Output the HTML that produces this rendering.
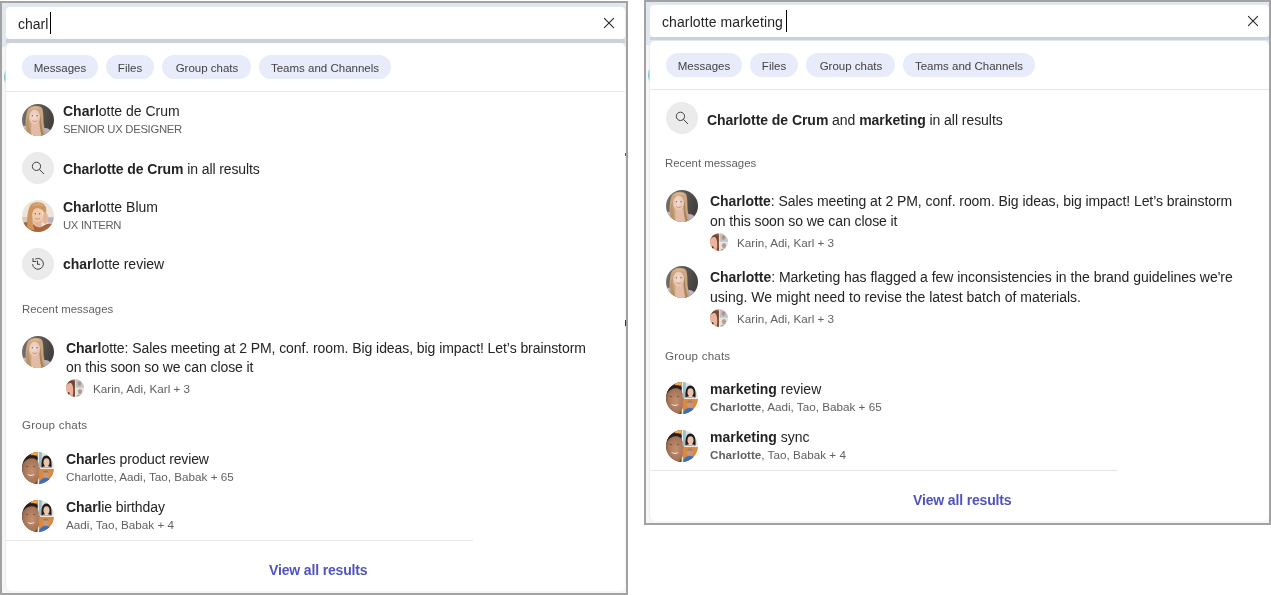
<!DOCTYPE html>
<html><head><meta charset="utf-8"><title>Search</title>
<style>
html,body{margin:0;padding:0;background:#ffffff;width:1271px;height:595px;overflow:hidden;}
body{position:relative;font-family:"Liberation Sans", sans-serif;}
.t{will-change:transform;}
.r{position:absolute;display:block;}
.t{position:absolute;white-space:nowrap;line-height:20px;font-family:"Liberation Sans", sans-serif;}
.t b{font-weight:700;}
.chip{background:#e8ebfa;border-radius:12px;}
</style></head><body>
<div class="r" style="left:0px;top:1px;width:628px;height:594px;background:#a2a2a2;"></div>
<div class="r" style="left:2px;top:3px;width:624px;height:590px;background:#f6f6f6;"></div>
<div class="r" style="left:2px;top:3px;width:624px;height:43.8px;background:#e1e7ee;"></div>
<div class="r" style="left:4px;top:63.5px;width:26.5px;height:26.5px;border-radius:50%;background:#7fc7c7"></div>
<div class="r" style="left:5.7px;top:7px;width:619px;height:32px;background:#fff;border-radius:4px"></div>
<div class="r" style="left:5.7px;top:39px;width:619.8px;height:3.6px;background:#ccd2d9;"></div>
<div class="r" style="left:5.9px;top:42.5px;width:619.6px;height:548.5px;background:#fff;border-radius:5px;box-shadow:-0.6px 0 0 #e9e9e9"></div>
<div class="t" style="left:18.30px;top:13.95px;font-size:14px;color:#242424;font-weight:400;letter-spacing:0px;">charl</div>
<div class="r" style="left:49.6px;top:12px;width:1.5px;height:21.8px;background:#000;"></div>
<svg class="r" style="left:603px;top:17px" width="12" height="12" viewBox="0 0 12 12"><path d="M1.4 1.4 L10.6 10.6 M10.6 1.4 L1.4 10.6" stroke="#242424" stroke-width="1.05" stroke-linecap="round"/></svg>
<div class="r chip" style="left:22px;top:55px;width:76px;height:24px;"></div>
<div class="t" style="left:60.00px;top:58.11px;font-size:11.5px;color:#424242;font-weight:400;letter-spacing:0px;transform:translateX(-50%);">Messages</div>
<div class="r chip" style="left:106px;top:55px;width:48px;height:24px;"></div>
<div class="t" style="left:130.00px;top:58.11px;font-size:11.5px;color:#424242;font-weight:400;letter-spacing:0px;transform:translateX(-50%);">Files</div>
<div class="r chip" style="left:162px;top:55px;width:89px;height:24px;"></div>
<div class="t" style="left:206.50px;top:58.11px;font-size:11.5px;color:#424242;font-weight:400;letter-spacing:0px;transform:translateX(-50%);">Group chats</div>
<div class="r chip" style="left:259px;top:55px;width:132px;height:24px;"></div>
<div class="t" style="left:325.00px;top:58.11px;font-size:11.5px;color:#424242;font-weight:400;letter-spacing:0px;transform:translateX(-50%);">Teams and Channels</div>
<div class="r" style="left:5.9px;top:90.6px;width:619.6px;height:1px;background:#e6e6e6;"></div>
<svg class="r" style="left:22px;top:104px" width="32" height="32" viewBox="0 0 32 32"><defs><clipPath id="cc1"><circle cx="16" cy="16" r="16"/></clipPath>
<linearGradient id="bgc1" x1="0" y1="0" x2="1" y2="0.3"><stop offset="0" stop-color="#7a7470"/><stop offset="0.6" stop-color="#5a5552"/><stop offset="1" stop-color="#45413f"/></linearGradient>
<radialGradient id="fc1" cx="0.45" cy="0.45" r="0.6"><stop offset="0" stop-color="#f5dccf"/><stop offset="1" stop-color="#e6c0ac"/></radialGradient></defs>
<g clip-path="url(#cc1)"><rect width="32" height="32" fill="url(#bgc1)"/>
<path d="M0 22 C3 21 6 22 8 26 L8 32 L0 32 Z" fill="#c4c0da"/>
<path d="M20 25 C23 23 27 24 30 28 L30 32 L20 32 Z" fill="#b9b3c9"/>
<path d="M4 32 C3 22 3.5 10 6 5 C9 1 17 0.5 20 4 C22 8 21 16 22 22 C23 27 24 30 25 32 Z" fill="#c9a580"/>
<path d="M7 6 C10 2 17 2 19.5 5.5 C16 4 11 4 7 6 Z" fill="#ddbd96"/>
<path d="M9.5 19 L17.5 19 L19 32 L9 32 Z" fill="#e4bca6"/>
<ellipse cx="12.6" cy="13" rx="5.5" ry="7.5" fill="url(#fc1)"/>
<path d="M6.5 11 C6 20 8.5 27 10 32 L5.5 32 C4 26 4 17 6.5 11 Z" fill="#b8936a"/>
<path d="M18.5 11 C19.5 19 19.5 26 23 32 L20 32 C17.5 26 17 19 18.5 11 Z" fill="#a88560"/>
<circle cx="10.4" cy="11.8" r="0.8" fill="#6a7a96"/><circle cx="15" cy="11.8" r="0.8" fill="#6a7a96"/>
<path d="M10.4 16.6 C11.9 17.8 13.7 17.8 15.2 16.6" stroke="#c98a80" stroke-width="0.9" fill="none"/>
</g></svg>
<div class="t" style="left:63.40px;top:100.95px;font-size:14px;color:#242424;font-weight:400;letter-spacing:0px;"><b>Charl</b>otte de Crum</div>
<div class="t" style="left:63.40px;top:119.08px;font-size:11.3px;color:#616161;font-weight:400;letter-spacing:-0.3px;">SENIOR UX DESIGNER</div>
<svg class="r" style="left:22px;top:152px" width="32" height="32" viewBox="0 0 32 32"><circle cx="16" cy="16" r="16" fill="#ebebeb"/><circle cx="14.45" cy="14.35" r="4.15" fill="none" stroke="#424242" stroke-width="1"/><path d="M17.6 17.6 L21.7 21.7" stroke="#424242" stroke-width="1" stroke-linecap="round"/></svg>
<div class="t" style="left:63.10px;top:158.75px;font-size:14px;color:#242424;font-weight:400;letter-spacing:-0.1px;"><b>Charlotte de Crum</b> in all results</div>
<svg class="r" style="left:22px;top:200px" width="32" height="32" viewBox="0 0 32 32"><defs><clipPath id="cb2"><circle cx="16" cy="16" r="16"/></clipPath></defs>
<g clip-path="url(#cb2)"><rect width="32" height="32" fill="#ece5d9"/>
<rect y="17" width="32" height="6" fill="#d8ccb8"/>
<rect x="26" y="17.5" width="5" height="5" fill="#bfb0bd"/>
<path d="M12 20 L19 20 L20 28 L11 28 Z" fill="#e7b597"/>
<path d="M0 24 C4 21 9 21 12 25 C15 28 19 28 21 26 C25 23 29 23 32 24 L32 32 L0 32 Z" fill="#a8633f"/>
<path d="M5.5 29 C4.5 19 5.5 8 9.5 4 C13.5 1.5 20 1.5 23 5.5 C25 8.5 24.5 12 23 15 L21 11 C18 7.5 12.5 8 10.8 12 C10 18 10.5 25 12.5 30 Z" fill="#cd955f"/>
<path d="M9.5 6 C13 2.5 20 2.5 22.5 6.5 C19 5 13 5 9.5 6 Z" fill="#deac78"/>
<ellipse cx="15.4" cy="15" rx="5" ry="7" fill="#f1c9ab"/>
<ellipse cx="23.3" cy="18" rx="2.6" ry="6" fill="#e6b595"/>
<circle cx="13.3" cy="13.8" r="0.7" fill="#7a6a5a"/><circle cx="17.5" cy="13.8" r="0.7" fill="#7a6a5a"/>
<path d="M13 18.3 C14.5 19.3 16.5 19.3 18 18.3" stroke="#c98878" stroke-width="0.9" fill="none"/>
</g></svg>
<div class="t" style="left:63.40px;top:196.95px;font-size:14px;color:#242424;font-weight:400;letter-spacing:0px;"><b>Charl</b>otte Blum</div>
<div class="t" style="left:63.40px;top:215.08px;font-size:11.3px;color:#616161;font-weight:400;letter-spacing:-0.3px;">UX INTERN</div>
<svg class="r" style="left:22px;top:248px" width="32" height="32" viewBox="0 0 32 32"><circle cx="16" cy="16" r="16" fill="#ebebeb"/><path d="M13.3 11.17 A5.4 5.4 0 1 1 10.6 16.13" fill="none" stroke="#424242" stroke-width="1"/><path d="M11 10.4 L11 13.4 L13.85 13.4" fill="none" stroke="#424242" stroke-width="1.05" stroke-linecap="round" stroke-linejoin="round"/><path d="M15.5 13.1 L15.5 16.15 L17.66 16.15" fill="none" stroke="#424242" stroke-width="1.05" stroke-linecap="round" stroke-linejoin="round"/></svg>
<div class="t" style="left:63.40px;top:254.45px;font-size:14px;color:#242424;font-weight:400;letter-spacing:0px;"><b>charl</b>otte review</div>
<div class="t" style="left:21.60px;top:299.05px;font-size:11.4px;color:#616161;font-weight:400;letter-spacing:0px;">Recent messages</div>
<svg class="r" style="left:22px;top:336px" width="32" height="32" viewBox="0 0 32 32"><defs><clipPath id="cc3"><circle cx="16" cy="16" r="16"/></clipPath>
<linearGradient id="bgc3" x1="0" y1="0" x2="1" y2="0.3"><stop offset="0" stop-color="#7a7470"/><stop offset="0.6" stop-color="#5a5552"/><stop offset="1" stop-color="#45413f"/></linearGradient>
<radialGradient id="fc3" cx="0.45" cy="0.45" r="0.6"><stop offset="0" stop-color="#f5dccf"/><stop offset="1" stop-color="#e6c0ac"/></radialGradient></defs>
<g clip-path="url(#cc3)"><rect width="32" height="32" fill="url(#bgc3)"/>
<path d="M0 22 C3 21 6 22 8 26 L8 32 L0 32 Z" fill="#c4c0da"/>
<path d="M20 25 C23 23 27 24 30 28 L30 32 L20 32 Z" fill="#b9b3c9"/>
<path d="M4 32 C3 22 3.5 10 6 5 C9 1 17 0.5 20 4 C22 8 21 16 22 22 C23 27 24 30 25 32 Z" fill="#c9a580"/>
<path d="M7 6 C10 2 17 2 19.5 5.5 C16 4 11 4 7 6 Z" fill="#ddbd96"/>
<path d="M9.5 19 L17.5 19 L19 32 L9 32 Z" fill="#e4bca6"/>
<ellipse cx="12.6" cy="13" rx="5.5" ry="7.5" fill="url(#fc3)"/>
<path d="M6.5 11 C6 20 8.5 27 10 32 L5.5 32 C4 26 4 17 6.5 11 Z" fill="#b8936a"/>
<path d="M18.5 11 C19.5 19 19.5 26 23 32 L20 32 C17.5 26 17 19 18.5 11 Z" fill="#a88560"/>
<circle cx="10.4" cy="11.8" r="0.8" fill="#6a7a96"/><circle cx="15" cy="11.8" r="0.8" fill="#6a7a96"/>
<path d="M10.4 16.6 C11.9 17.8 13.7 17.8 15.2 16.6" stroke="#c98a80" stroke-width="0.9" fill="none"/>
</g></svg>
<div class="t" style="left:66.20px;top:337.55px;font-size:14px;color:#242424;font-weight:400;letter-spacing:-0.07px;"><b>Charl</b>otte: Sales meeting at 2 PM, conf. room. Big ideas, big impact! Let’s brainstorm</div>
<div class="t" style="left:66.20px;top:356.95px;font-size:14px;color:#242424;font-weight:400;letter-spacing:-0.08px;">on this soon so we can close it</div>
<svg class="r" style="left:66px;top:379px" width="18" height="18" viewBox="0 0 18 18"><defs><clipPath id="cs4"><circle cx="9" cy="9" r="9"/></clipPath></defs>
<g clip-path="url(#cs4)"><rect width="18" height="18" fill="#f2f2f2"/>
<rect x="0" y="0" width="8.9" height="18" fill="#d8a08a"/>
<ellipse cx="4.2" cy="10" rx="4.6" ry="6.2" fill="#eab59c"/>
<path d="M0 7 C1 2.5 5 0.5 8.9 1.5 L8.9 18 L6.8 18 C7.6 12 7.6 6 5 4 C3 3.5 1.5 4.5 0 7 Z" fill="#6e4a36"/>
<ellipse cx="2.4" cy="14.4" rx="1.3" ry="1.1" fill="#3a2a22"/>
<rect x="9.5" y="0" width="8.5" height="8.8" fill="#bcc4ca"/>
<ellipse cx="13.5" cy="4.6" rx="1.8" ry="2.4" fill="#b89282"/>
<rect x="9.5" y="9.3" width="8.5" height="8.7" fill="#e2e2e2"/>
<ellipse cx="14" cy="12.6" rx="2.2" ry="2.6" fill="#c49888"/>
<ellipse cx="14" cy="17.6" rx="3.5" ry="2" fill="#9aa0a8"/>
</g></svg>
<div class="t" style="left:92.70px;top:378.54px;font-size:11.7px;color:#616161;font-weight:400;letter-spacing:0px;">Karin, Adi, Karl + 3</div>
<div class="t" style="left:21.60px;top:415.18px;font-size:11.6px;color:#616161;font-weight:400;letter-spacing:0.2px;">Group chats</div>
<svg class="r" style="left:22px;top:452px" width="32" height="32" viewBox="0 0 32 32"><defs><clipPath id="cg5"><circle cx="16" cy="16" r="16"/></clipPath>
<radialGradient id="gm5" cx="0.55" cy="0.5" r="0.6"><stop offset="0" stop-color="#c4906f"/><stop offset="0.7" stop-color="#a67458"/><stop offset="1" stop-color="#7a5240"/></radialGradient></defs>
<g clip-path="url(#cg5)"><rect width="32" height="32" fill="#ffffff"/>
<rect x="0" y="0" width="15.6" height="32" fill="#5a3a2c"/>
<rect x="9" y="0" width="6.6" height="3.5" fill="#f0a848"/>
<ellipse cx="9" cy="19" rx="9.5" ry="13.5" fill="url(#gm5)"/>
<path d="M0 9 C3 3 11 2 15.6 5 L15.6 8 C11 5 4 6 0 12 Z" fill="#2a1f1a"/>
<circle cx="5" cy="14.5" r="0.7" fill="#5a3a2a"/><circle cx="12" cy="14.5" r="0.7" fill="#5a3a2a"/>
<path d="M5 22 C7 24.5 11 24.5 13 22 C11 23 7 23 5 22 Z" fill="#f2ece8"/>
<rect x="16.8" y="0" width="15.2" height="15.5" fill="#d6e2e4"/>
<rect x="16.8" y="0" width="3" height="15.5" fill="#9fbcc2"/>
<path d="M19.5 15.5 C19 8 20.5 3.5 24.5 3.5 C28.5 3.5 30 8 29.5 15.5 Z" fill="#1e1a19"/>
<ellipse cx="24.5" cy="10.2" rx="3" ry="3.9" fill="#e9c4aa"/>
<path d="M20 15.5 C22 13.5 27 13.5 29 15.5 Z" fill="#ead0c0"/>
<rect x="16.8" y="16.8" width="15.2" height="15.2" fill="#d88a42"/>
<ellipse cx="23.8" cy="22.2" rx="2.8" ry="3.4" fill="#c9977c"/>
<path d="M21 20.5 C21 18 26.5 18 26.5 20.5 Z" fill="#8a7a70"/>
<path d="M17 32 C18 27 21 26 24 26 C27 26 30 27 31 32 Z" fill="#3c6fb8"/>
</g></svg>
<div class="t" style="left:66.40px;top:449.15px;font-size:14px;color:#242424;font-weight:400;letter-spacing:-0.12px;"><b>Charl</b>es product review</div>
<div class="t" style="left:66.40px;top:466.94px;font-size:11.7px;color:#616161;font-weight:400;letter-spacing:0px;">Charlotte, Aadi, Tao, Babak + 65</div>
<svg class="r" style="left:22px;top:500px" width="32" height="32" viewBox="0 0 32 32"><defs><clipPath id="cg6"><circle cx="16" cy="16" r="16"/></clipPath>
<radialGradient id="gm6" cx="0.55" cy="0.5" r="0.6"><stop offset="0" stop-color="#c4906f"/><stop offset="0.7" stop-color="#a67458"/><stop offset="1" stop-color="#7a5240"/></radialGradient></defs>
<g clip-path="url(#cg6)"><rect width="32" height="32" fill="#ffffff"/>
<rect x="0" y="0" width="15.6" height="32" fill="#5a3a2c"/>
<rect x="9" y="0" width="6.6" height="3.5" fill="#f0a848"/>
<ellipse cx="9" cy="19" rx="9.5" ry="13.5" fill="url(#gm6)"/>
<path d="M0 9 C3 3 11 2 15.6 5 L15.6 8 C11 5 4 6 0 12 Z" fill="#2a1f1a"/>
<circle cx="5" cy="14.5" r="0.7" fill="#5a3a2a"/><circle cx="12" cy="14.5" r="0.7" fill="#5a3a2a"/>
<path d="M5 22 C7 24.5 11 24.5 13 22 C11 23 7 23 5 22 Z" fill="#f2ece8"/>
<rect x="16.8" y="0" width="15.2" height="15.5" fill="#d6e2e4"/>
<rect x="16.8" y="0" width="3" height="15.5" fill="#9fbcc2"/>
<path d="M19.5 15.5 C19 8 20.5 3.5 24.5 3.5 C28.5 3.5 30 8 29.5 15.5 Z" fill="#1e1a19"/>
<ellipse cx="24.5" cy="10.2" rx="3" ry="3.9" fill="#e9c4aa"/>
<path d="M20 15.5 C22 13.5 27 13.5 29 15.5 Z" fill="#ead0c0"/>
<rect x="16.8" y="16.8" width="15.2" height="15.2" fill="#d88a42"/>
<ellipse cx="23.8" cy="22.2" rx="2.8" ry="3.4" fill="#c9977c"/>
<path d="M21 20.5 C21 18 26.5 18 26.5 20.5 Z" fill="#8a7a70"/>
<path d="M17 32 C18 27 21 26 24 26 C27 26 30 27 31 32 Z" fill="#3c6fb8"/>
</g></svg>
<div class="t" style="left:66.40px;top:497.15px;font-size:14px;color:#242424;font-weight:400;letter-spacing:-0.1px;"><b>Charl</b>ie birthday</div>
<div class="t" style="left:66.40px;top:514.94px;font-size:11.7px;color:#616161;font-weight:400;letter-spacing:0px;">Aadi, Tao, Babak + 4</div>
<div class="r" style="left:5.9px;top:539.6px;width:467.6px;height:1px;background:#e6e6e6;"></div>
<div class="t" style="left:269.30px;top:559.75px;font-size:14px;color:#4f53bd;font-weight:700;letter-spacing:-0.15px;">View all results</div>
<div class="r" style="left:625px;top:152.5px;width:1px;height:3.5px;background:#555;"></div>
<div class="r" style="left:625px;top:320px;width:1px;height:6px;background:#333;"></div>
<div class="r" style="left:644px;top:0px;width:627px;height:524.6px;background:#a2a2a2;"></div>
<div class="r" style="left:646px;top:2px;width:623px;height:520.6px;background:#f6f6f6;"></div>
<div class="r" style="left:646px;top:2px;width:623px;height:42.5px;background:#e1e7ee;"></div>
<div class="r" style="left:648px;top:61.5px;width:26.5px;height:26.5px;border-radius:50%;background:#7fc7c7"></div>
<div class="r" style="left:650.3px;top:4.7px;width:618.5px;height:32px;background:#fff;border-radius:4px"></div>
<div class="r" style="left:650.3px;top:36.7px;width:618.5px;height:3.8px;background:#ccd2d9;"></div>
<div class="r" style="left:650px;top:40.5px;width:618.8px;height:480.5px;background:#fff;border-radius:5px;box-shadow:-0.6px 0 0 #e9e9e9"></div>
<div class="t" style="left:662.20px;top:11.65px;font-size:14px;color:#242424;font-weight:400;letter-spacing:0.1px;">charlotte marketing</div>
<div class="r" style="left:785.6px;top:10px;width:1.5px;height:21.7px;background:#000;"></div>
<svg class="r" style="left:1247px;top:14.8px" width="12" height="12" viewBox="0 0 12 12"><path d="M1.4 1.4 L10.6 10.6 M10.6 1.4 L1.4 10.6" stroke="#242424" stroke-width="1.05" stroke-linecap="round"/></svg>
<div class="r chip" style="left:666px;top:52.9px;width:76px;height:24px;"></div>
<div class="t" style="left:704.00px;top:56.01px;font-size:11.5px;color:#424242;font-weight:400;letter-spacing:0px;transform:translateX(-50%);">Messages</div>
<div class="r chip" style="left:750px;top:52.9px;width:48px;height:24px;"></div>
<div class="t" style="left:774.00px;top:56.01px;font-size:11.5px;color:#424242;font-weight:400;letter-spacing:0px;transform:translateX(-50%);">Files</div>
<div class="r chip" style="left:806px;top:52.9px;width:89px;height:24px;"></div>
<div class="t" style="left:850.50px;top:56.01px;font-size:11.5px;color:#424242;font-weight:400;letter-spacing:0px;transform:translateX(-50%);">Group chats</div>
<div class="r chip" style="left:903px;top:52.9px;width:132px;height:24px;"></div>
<div class="t" style="left:969.00px;top:56.01px;font-size:11.5px;color:#424242;font-weight:400;letter-spacing:0px;transform:translateX(-50%);">Teams and Channels</div>
<div class="r" style="left:650px;top:89px;width:618.8px;height:1px;background:#e6e6e6;"></div>
<svg class="r" style="left:666px;top:102px" width="32" height="32" viewBox="0 0 32 32"><circle cx="16" cy="16" r="16" fill="#ebebeb"/><circle cx="14.45" cy="14.35" r="4.15" fill="none" stroke="#424242" stroke-width="1"/><path d="M17.6 17.6 L21.7 21.7" stroke="#424242" stroke-width="1" stroke-linecap="round"/></svg>
<div class="t" style="left:707.40px;top:109.65px;font-size:14px;color:#242424;font-weight:400;letter-spacing:-0.05px;"><b>Charlotte de Crum</b> and <b>marketing</b> in all results</div>
<div class="t" style="left:665.20px;top:153.25px;font-size:11.4px;color:#616161;font-weight:400;letter-spacing:0px;">Recent messages</div>
<svg class="r" style="left:666px;top:190px" width="32" height="32" viewBox="0 0 32 32"><defs><clipPath id="cc7"><circle cx="16" cy="16" r="16"/></clipPath>
<linearGradient id="bgc7" x1="0" y1="0" x2="1" y2="0.3"><stop offset="0" stop-color="#7a7470"/><stop offset="0.6" stop-color="#5a5552"/><stop offset="1" stop-color="#45413f"/></linearGradient>
<radialGradient id="fc7" cx="0.45" cy="0.45" r="0.6"><stop offset="0" stop-color="#f5dccf"/><stop offset="1" stop-color="#e6c0ac"/></radialGradient></defs>
<g clip-path="url(#cc7)"><rect width="32" height="32" fill="url(#bgc7)"/>
<path d="M0 22 C3 21 6 22 8 26 L8 32 L0 32 Z" fill="#c4c0da"/>
<path d="M20 25 C23 23 27 24 30 28 L30 32 L20 32 Z" fill="#b9b3c9"/>
<path d="M4 32 C3 22 3.5 10 6 5 C9 1 17 0.5 20 4 C22 8 21 16 22 22 C23 27 24 30 25 32 Z" fill="#c9a580"/>
<path d="M7 6 C10 2 17 2 19.5 5.5 C16 4 11 4 7 6 Z" fill="#ddbd96"/>
<path d="M9.5 19 L17.5 19 L19 32 L9 32 Z" fill="#e4bca6"/>
<ellipse cx="12.6" cy="13" rx="5.5" ry="7.5" fill="url(#fc7)"/>
<path d="M6.5 11 C6 20 8.5 27 10 32 L5.5 32 C4 26 4 17 6.5 11 Z" fill="#b8936a"/>
<path d="M18.5 11 C19.5 19 19.5 26 23 32 L20 32 C17.5 26 17 19 18.5 11 Z" fill="#a88560"/>
<circle cx="10.4" cy="11.8" r="0.8" fill="#6a7a96"/><circle cx="15" cy="11.8" r="0.8" fill="#6a7a96"/>
<path d="M10.4 16.6 C11.9 17.8 13.7 17.8 15.2 16.6" stroke="#c98a80" stroke-width="0.9" fill="none"/>
</g></svg>
<div class="t" style="left:710.00px;top:191.15px;font-size:14px;color:#242424;font-weight:400;letter-spacing:-0.07px;"><b>Charlotte</b>: Sales meeting at 2 PM, conf. room. Big ideas, big impact! Let’s brainstorm</div>
<div class="t" style="left:710.00px;top:211.35px;font-size:14px;color:#242424;font-weight:400;letter-spacing:-0.08px;">on this soon so we can close it</div>
<svg class="r" style="left:710px;top:233px" width="18" height="18" viewBox="0 0 18 18"><defs><clipPath id="cs8"><circle cx="9" cy="9" r="9"/></clipPath></defs>
<g clip-path="url(#cs8)"><rect width="18" height="18" fill="#f2f2f2"/>
<rect x="0" y="0" width="8.9" height="18" fill="#d8a08a"/>
<ellipse cx="4.2" cy="10" rx="4.6" ry="6.2" fill="#eab59c"/>
<path d="M0 7 C1 2.5 5 0.5 8.9 1.5 L8.9 18 L6.8 18 C7.6 12 7.6 6 5 4 C3 3.5 1.5 4.5 0 7 Z" fill="#6e4a36"/>
<ellipse cx="2.4" cy="14.4" rx="1.3" ry="1.1" fill="#3a2a22"/>
<rect x="9.5" y="0" width="8.5" height="8.8" fill="#bcc4ca"/>
<ellipse cx="13.5" cy="4.6" rx="1.8" ry="2.4" fill="#b89282"/>
<rect x="9.5" y="9.3" width="8.5" height="8.7" fill="#e2e2e2"/>
<ellipse cx="14" cy="12.6" rx="2.2" ry="2.6" fill="#c49888"/>
<ellipse cx="14" cy="17.6" rx="3.5" ry="2" fill="#9aa0a8"/>
</g></svg>
<div class="t" style="left:736.60px;top:233.14px;font-size:11.7px;color:#616161;font-weight:400;letter-spacing:0px;">Karin, Adi, Karl + 3</div>
<svg class="r" style="left:666px;top:266px" width="32" height="32" viewBox="0 0 32 32"><defs><clipPath id="cc9"><circle cx="16" cy="16" r="16"/></clipPath>
<linearGradient id="bgc9" x1="0" y1="0" x2="1" y2="0.3"><stop offset="0" stop-color="#7a7470"/><stop offset="0.6" stop-color="#5a5552"/><stop offset="1" stop-color="#45413f"/></linearGradient>
<radialGradient id="fc9" cx="0.45" cy="0.45" r="0.6"><stop offset="0" stop-color="#f5dccf"/><stop offset="1" stop-color="#e6c0ac"/></radialGradient></defs>
<g clip-path="url(#cc9)"><rect width="32" height="32" fill="url(#bgc9)"/>
<path d="M0 22 C3 21 6 22 8 26 L8 32 L0 32 Z" fill="#c4c0da"/>
<path d="M20 25 C23 23 27 24 30 28 L30 32 L20 32 Z" fill="#b9b3c9"/>
<path d="M4 32 C3 22 3.5 10 6 5 C9 1 17 0.5 20 4 C22 8 21 16 22 22 C23 27 24 30 25 32 Z" fill="#c9a580"/>
<path d="M7 6 C10 2 17 2 19.5 5.5 C16 4 11 4 7 6 Z" fill="#ddbd96"/>
<path d="M9.5 19 L17.5 19 L19 32 L9 32 Z" fill="#e4bca6"/>
<ellipse cx="12.6" cy="13" rx="5.5" ry="7.5" fill="url(#fc9)"/>
<path d="M6.5 11 C6 20 8.5 27 10 32 L5.5 32 C4 26 4 17 6.5 11 Z" fill="#b8936a"/>
<path d="M18.5 11 C19.5 19 19.5 26 23 32 L20 32 C17.5 26 17 19 18.5 11 Z" fill="#a88560"/>
<circle cx="10.4" cy="11.8" r="0.8" fill="#6a7a96"/><circle cx="15" cy="11.8" r="0.8" fill="#6a7a96"/>
<path d="M10.4 16.6 C11.9 17.8 13.7 17.8 15.2 16.6" stroke="#c98a80" stroke-width="0.9" fill="none"/>
</g></svg>
<div class="t" style="left:710.00px;top:267.35px;font-size:14px;color:#242424;font-weight:400;letter-spacing:-0.025px;"><b>Charlotte</b>: Marketing has flagged a few inconsistencies in the brand guidelines we're</div>
<div class="t" style="left:710.00px;top:287.45px;font-size:14px;color:#242424;font-weight:400;letter-spacing:0px;">using. We might need to revise the latest batch of materials.</div>
<svg class="r" style="left:710px;top:309px" width="18" height="18" viewBox="0 0 18 18"><defs><clipPath id="cs10"><circle cx="9" cy="9" r="9"/></clipPath></defs>
<g clip-path="url(#cs10)"><rect width="18" height="18" fill="#f2f2f2"/>
<rect x="0" y="0" width="8.9" height="18" fill="#d8a08a"/>
<ellipse cx="4.2" cy="10" rx="4.6" ry="6.2" fill="#eab59c"/>
<path d="M0 7 C1 2.5 5 0.5 8.9 1.5 L8.9 18 L6.8 18 C7.6 12 7.6 6 5 4 C3 3.5 1.5 4.5 0 7 Z" fill="#6e4a36"/>
<ellipse cx="2.4" cy="14.4" rx="1.3" ry="1.1" fill="#3a2a22"/>
<rect x="9.5" y="0" width="8.5" height="8.8" fill="#bcc4ca"/>
<ellipse cx="13.5" cy="4.6" rx="1.8" ry="2.4" fill="#b89282"/>
<rect x="9.5" y="9.3" width="8.5" height="8.7" fill="#e2e2e2"/>
<ellipse cx="14" cy="12.6" rx="2.2" ry="2.6" fill="#c49888"/>
<ellipse cx="14" cy="17.6" rx="3.5" ry="2" fill="#9aa0a8"/>
</g></svg>
<div class="t" style="left:736.60px;top:308.94px;font-size:11.7px;color:#616161;font-weight:400;letter-spacing:0px;">Karin, Adi, Karl + 3</div>
<div class="t" style="left:665.40px;top:345.58px;font-size:11.6px;color:#616161;font-weight:400;letter-spacing:0.2px;">Group chats</div>
<svg class="r" style="left:666px;top:382px" width="32" height="32" viewBox="0 0 32 32"><defs><clipPath id="cg11"><circle cx="16" cy="16" r="16"/></clipPath>
<radialGradient id="gm11" cx="0.55" cy="0.5" r="0.6"><stop offset="0" stop-color="#c4906f"/><stop offset="0.7" stop-color="#a67458"/><stop offset="1" stop-color="#7a5240"/></radialGradient></defs>
<g clip-path="url(#cg11)"><rect width="32" height="32" fill="#ffffff"/>
<rect x="0" y="0" width="15.6" height="32" fill="#5a3a2c"/>
<rect x="9" y="0" width="6.6" height="3.5" fill="#f0a848"/>
<ellipse cx="9" cy="19" rx="9.5" ry="13.5" fill="url(#gm11)"/>
<path d="M0 9 C3 3 11 2 15.6 5 L15.6 8 C11 5 4 6 0 12 Z" fill="#2a1f1a"/>
<circle cx="5" cy="14.5" r="0.7" fill="#5a3a2a"/><circle cx="12" cy="14.5" r="0.7" fill="#5a3a2a"/>
<path d="M5 22 C7 24.5 11 24.5 13 22 C11 23 7 23 5 22 Z" fill="#f2ece8"/>
<rect x="16.8" y="0" width="15.2" height="15.5" fill="#d6e2e4"/>
<rect x="16.8" y="0" width="3" height="15.5" fill="#9fbcc2"/>
<path d="M19.5 15.5 C19 8 20.5 3.5 24.5 3.5 C28.5 3.5 30 8 29.5 15.5 Z" fill="#1e1a19"/>
<ellipse cx="24.5" cy="10.2" rx="3" ry="3.9" fill="#e9c4aa"/>
<path d="M20 15.5 C22 13.5 27 13.5 29 15.5 Z" fill="#ead0c0"/>
<rect x="16.8" y="16.8" width="15.2" height="15.2" fill="#d88a42"/>
<ellipse cx="23.8" cy="22.2" rx="2.8" ry="3.4" fill="#c9977c"/>
<path d="M21 20.5 C21 18 26.5 18 26.5 20.5 Z" fill="#8a7a70"/>
<path d="M17 32 C18 27 21 26 24 26 C27 26 30 27 31 32 Z" fill="#3c6fb8"/>
</g></svg>
<div class="t" style="left:710.40px;top:379.05px;font-size:14px;color:#242424;font-weight:400;letter-spacing:0px;"><b>marketing</b> review</div>
<div class="t" style="left:710.40px;top:397.24px;font-size:11.7px;color:#616161;font-weight:400;letter-spacing:0px;"><b>Charlotte</b>, Aadi, Tao, Babak + 65</div>
<svg class="r" style="left:666px;top:430px" width="32" height="32" viewBox="0 0 32 32"><defs><clipPath id="cg12"><circle cx="16" cy="16" r="16"/></clipPath>
<radialGradient id="gm12" cx="0.55" cy="0.5" r="0.6"><stop offset="0" stop-color="#c4906f"/><stop offset="0.7" stop-color="#a67458"/><stop offset="1" stop-color="#7a5240"/></radialGradient></defs>
<g clip-path="url(#cg12)"><rect width="32" height="32" fill="#ffffff"/>
<rect x="0" y="0" width="15.6" height="32" fill="#5a3a2c"/>
<rect x="9" y="0" width="6.6" height="3.5" fill="#f0a848"/>
<ellipse cx="9" cy="19" rx="9.5" ry="13.5" fill="url(#gm12)"/>
<path d="M0 9 C3 3 11 2 15.6 5 L15.6 8 C11 5 4 6 0 12 Z" fill="#2a1f1a"/>
<circle cx="5" cy="14.5" r="0.7" fill="#5a3a2a"/><circle cx="12" cy="14.5" r="0.7" fill="#5a3a2a"/>
<path d="M5 22 C7 24.5 11 24.5 13 22 C11 23 7 23 5 22 Z" fill="#f2ece8"/>
<rect x="16.8" y="0" width="15.2" height="15.5" fill="#d6e2e4"/>
<rect x="16.8" y="0" width="3" height="15.5" fill="#9fbcc2"/>
<path d="M19.5 15.5 C19 8 20.5 3.5 24.5 3.5 C28.5 3.5 30 8 29.5 15.5 Z" fill="#1e1a19"/>
<ellipse cx="24.5" cy="10.2" rx="3" ry="3.9" fill="#e9c4aa"/>
<path d="M20 15.5 C22 13.5 27 13.5 29 15.5 Z" fill="#ead0c0"/>
<rect x="16.8" y="16.8" width="15.2" height="15.2" fill="#d88a42"/>
<ellipse cx="23.8" cy="22.2" rx="2.8" ry="3.4" fill="#c9977c"/>
<path d="M21 20.5 C21 18 26.5 18 26.5 20.5 Z" fill="#8a7a70"/>
<path d="M17 32 C18 27 21 26 24 26 C27 26 30 27 31 32 Z" fill="#3c6fb8"/>
</g></svg>
<div class="t" style="left:710.40px;top:427.15px;font-size:14px;color:#242424;font-weight:400;letter-spacing:0px;"><b>marketing</b> sync</div>
<div class="t" style="left:710.40px;top:444.64px;font-size:11.7px;color:#616161;font-weight:400;letter-spacing:0px;"><b>Charlotte</b>, Tao, Babak + 4</div>
<div class="r" style="left:650px;top:469.7px;width:467.8px;height:1px;background:#e6e6e6;"></div>
<div class="t" style="left:913.30px;top:490.05px;font-size:14px;color:#4f53bd;font-weight:700;letter-spacing:-0.15px;">View all results</div>
</body></html>
